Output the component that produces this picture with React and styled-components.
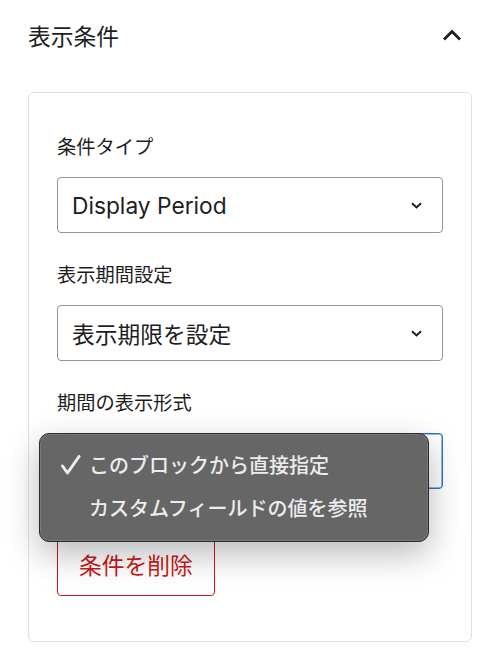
import React from "react";
import styled, { createGlobalStyle } from "styled-components";

const GlobalStyle = createGlobalStyle`
  body {
    margin: 0;
    background: #fff;
    color: #1e1e1e;
    font-family: Inter, "Noto Sans CJK JP", sans-serif;
  }
`;

const Panel = styled.div`
  width: 482px;
`;

const Header = styled.div`
  display: flex;
  align-items: center;
  justify-content: space-between;
  height: 70px;
  padding: 0 20px 0 28px;
`;

const Title = styled.h2`
  margin: 0;
  font-size: 22.75px;
  font-weight: 400;
`;

const Card = styled.div`
  width: 444px;
  box-sizing: border-box;
  margin: 22px 10px 0 28px;
  border: 1px solid #e0e0e0;
  border-radius: 6px;
  padding: 41px 28px 45px;
  display: flex;
  flex-direction: column;
  gap: 29px;
`;

const Field = styled.div`
  display: flex;
  flex-direction: column;
`;

const Label = styled.label`
  font-size: 19.25px;
  line-height: 27px;
  margin-bottom: 16px;
`;

const SelectWrap = styled.div`
  position: relative;
`;

const Select = styled.div`
  height: 56px;
  box-sizing: border-box;
  display: flex;
  align-items: center;
  justify-content: space-between;
  padding: 0 20px 0 14px;
  border: 1px solid ${p => (p.$focused ? "#2f72c4" : "#949494")};
  box-shadow: ${p => (p.$focused ? "inset 0 0 0 0.5px #2f72c4" : "none")};
  border-radius: 4px;
  font-size: 22.75px;
`;

const Menu = styled.ul`
  position: absolute;
  top: 0;
  left: -18px;
  width: 390px;
  box-sizing: border-box;
  margin: 0;
  padding: 9px 0 12px;
  list-style: none;
  background: #666;
  border: 1px solid #2b2b2b;
  border-radius: 10px;
  box-shadow: inset 0 0 0 1px rgba(255, 255, 255, 0.12),
    0 12px 34px rgba(0, 0, 0, 0.28);
  z-index: 10;
`;

const MenuItem = styled.li`
  display: flex;
  align-items: center;
  height: 43px;
  padding-left: 21px;
  font-size: 20px;
  font-weight: 500;
  color: #ececec;
`;

const CheckSlot = styled.span`
  width: 28px;
  display: flex;
  align-items: center;
`;

const DeleteButton = styled.button`
  align-self: flex-start;
  margin-top: 15px;
  height: 63px;
  padding: 0 21px;
  background: #fff;
  border: 1px solid #cc1818;
  border-radius: 4px;
  color: #cc1818;
  font-family: inherit;
  font-size: 22.75px;
`;

const ChevronDown = () => (
  <svg width="11" height="7" viewBox="0 0 11 7" fill="none">
    <path d="M1 1.2 L5.5 5.4 L10 1.2" stroke="#1e1e1e" strokeWidth="2" />
  </svg>
);

const ChevronUp = () => (
  <svg width="20" height="12" viewBox="0 0 20 12" fill="none">
    <path d="M2 10.5 L10 2.5 L18 10.5" stroke="#1e1e1e" strokeWidth="2.8" />
  </svg>
);

const Check = () => (
  <svg width="20" height="20" viewBox="0 0 20 20" fill="none">
    <path
      d="M1.5 11 L6.5 18 L18 1.5"
      stroke="#ededed"
      strokeWidth="3"
      strokeLinecap="round"
      strokeLinejoin="round"
    />
  </svg>
);

export default function App() {
  return (
    <Panel>
      <GlobalStyle />
      <Header>
        <Title>表示条件</Title>
        <ChevronUp />
      </Header>
      <Card>
        <Field>
          <Label>条件タイプ</Label>
          <Select>
            Display Period
            <ChevronDown />
          </Select>
        </Field>
        <Field>
          <Label>表示期間設定</Label>
          <Select>
            表示期限を設定
            <ChevronDown />
          </Select>
        </Field>
        <Field>
          <Label>期間の表示形式</Label>
          <SelectWrap>
            {/* the open menu covers this field's value */}
            <Select $focused />
            <Menu>
              <MenuItem>
                <CheckSlot>
                  <Check />
                </CheckSlot>
                このブロックから直接指定
              </MenuItem>
              <MenuItem>
                <CheckSlot />
                カスタムフィールドの値を参照
              </MenuItem>
            </Menu>
          </SelectWrap>
        </Field>
        <DeleteButton>条件を削除</DeleteButton>
      </Card>
    </Panel>
  );
}
